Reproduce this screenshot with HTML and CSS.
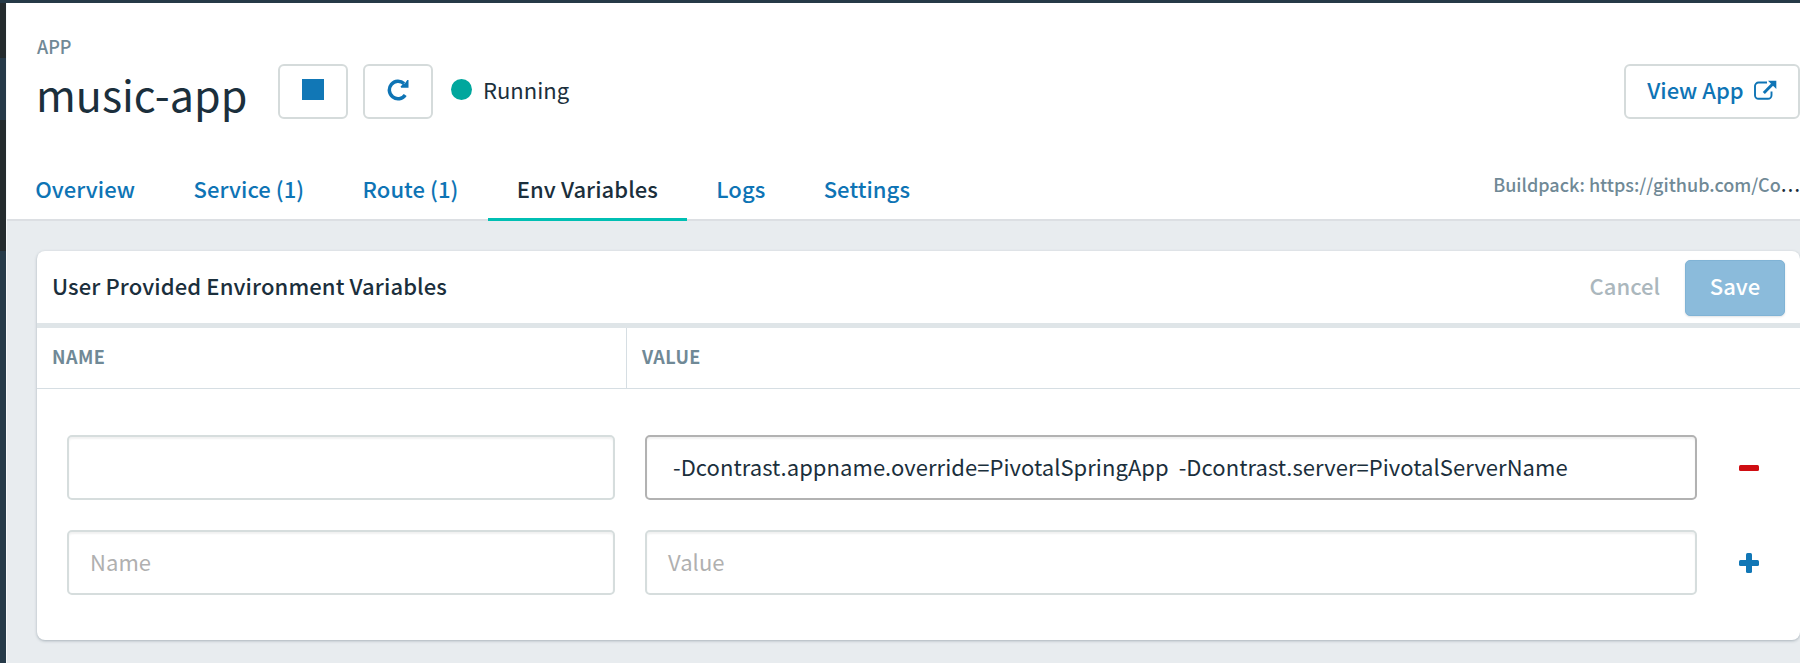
FILE: index.html
```html
<!DOCTYPE html>
<html lang="en">
<head>
<meta charset="utf-8">
<title>music-app</title>
<link rel="stylesheet" href="styles.css">
</head>
<body>
<div class="shell">
  <div class="topbar"></div>
  <aside class="rail"><div class="rail-active"></div><div class="rail-gap"></div><div class="rail-rest"></div></aside>
  <main class="page">
    <header class="header">
      <div class="eyebrow">APP</div>
      <div class="title-row">
        <h1 class="title">music-app</h1>
        <button class="btn btn-icon" aria-label="Stop"><svg width="22" height="21"><rect width="22" height="21" fill="#1177b6"/></svg></button>
        <button class="btn btn-icon btn-restart" aria-label="Restart"><svg width="22" height="22" viewBox="0 0 22 22"><path d="M18.200 16A8.700 8.800 0 1 1 17 4.600" fill="none" stroke="#0e74b5" stroke-width="3.500"/><path d="M21.500 1v7.800h-7.300l-.7-1.300 2.500-2.500 2-.8L20.300 1z" fill="#0e74b5"/></svg></button>
        <span class="dot"></span>
        <span class="status">Running</span>
        <button class="btn btn-view"><span>View App</span><svg width="23" height="20" viewBox="0 0 23 20"><path d="M13 2.500H4.600A3.600 3.600 0 0 0 1 6.100v9.100a3.600 3.600 0 0 0 3.600 3.600h9.300a3.600 3.600 0 0 0 3.600-3.600V11.500" fill="none" stroke="#0e74b5" stroke-width="1.900"/><path d="M9.800 13L18.500 4.300" stroke="#0e74b5" stroke-width="3"/><path d="M14 .7h8.300v8.200z" fill="#0e74b5"/></svg></button>
      </div>
      <div class="tab-row">
        <nav class="tabs">
          <a class="tab tab-overview">Overview</a><a class="tab tab-service">Service (1)</a><a class="tab tab-route">Route (1)</a><a class="tab tab-env active">Env Variables</a><a class="tab tab-logs">Logs</a><a class="tab tab-settings">Settings</a>
        </nav>
        <div class="buildpack">Buildpack: https://github.com/Co<span class="more">…</span></div>
      </div>
    </header>
    <section class="card">
      <div class="card-head">
        <h2 class="card-title">User Provided Environment Variables</h2>
        <span class="cancel">Cancel</span>
        <button class="save">Save</button>
      </div>
      <div class="columns"><div class="col col-name">NAME</div><div class="col">VALUE</div></div>
      <div class="rows">
        <div class="row">
          <div class="field"></div>
          <div class="field field-value filled"> -Dcontrast.appname.override=PivotalSpringApp  -Dcontrast.server=PivotalServerName</div>
          <svg class="action" width="20" height="20"><rect y="7" width="20" height="6" rx="1.500" fill="#cf0d12"/></svg>
        </div>
        <div class="row">
          <div class="field placeholder">Name</div>
          <div class="field placeholder">Value</div>
          <svg class="action" width="20" height="20"><rect y="7" width="20" height="6" rx="1.500" fill="#1177b6"/><rect x="7" width="6" height="20" rx="1.500" fill="#1177b6"/></svg>
        </div>
      </div>
    </section>
  </main>
</div>
</body>
</html>
```
FILE: styles.css
```css
* { box-sizing: border-box; }
body { margin: 0; overflow: hidden; background: #e8ecef; color: #1b2f3c; font-family: "Noto Sans CJK SC", "Open Sans", sans-serif; }
button { font: inherit; }
.shell { display: grid; grid-template: 3px 660px / 6px 1794px; }
.topbar { grid-column: 1 / 3; background: #263a47; }
.rail { background: #242b2e; padding-top: 55px; display: flex; flex-direction: column; }
.rail-active { height: 62px; background: #263a49; }
.rail-gap { height: 131px; }
.rail-rest { flex: 1; background: #263a49; }
.page { display: flex; flex-direction: column; border-left: 1px solid #f7f9fa; }
.header { height: 218px; background: #fff; border-bottom: 2px solid #dcdfe3; display: flex; flex-direction: column; }
.eyebrow { margin: 28px 0 3px 30px; height: 30px; line-height: 30px; font-size: 18px; font-weight: 500; color: #708996; }
.title-row { display: flex; height: 55px; }
.title { margin: 0; padding-left: 29px; width: 271px; font-size: 43px; font-weight: 400; line-height: 58px; white-space: nowrap; }
.btn { border: 2px solid #d5dbdb; border-radius: 6px; background: #fff; height: 55px; padding: 0; display: flex; align-items: flex-start; justify-content: center; color: #0e74b5; }
.btn-icon { width: 70px; padding-top: 13px; }
.btn-restart { margin-left: 15px; }
.dot { width: 21px; height: 21px; border-radius: 50%; background: #00a79d; margin: 15px 11px 0 18px; }
.status { font-size: 22px; line-height: 50px; }
.btn-view { width: 176px; margin-left: auto; font-size: 22px; font-weight: 500; line-height: 46px; gap: 10px; }
.btn-view svg { margin-top: 14px; }
.tab-row { display: flex; justify-content: space-between; flex: 1; padding-top: 41px; }
.tabs { display: flex; margin-left: -1px; }
.tab { height: 61px; padding: 0 29.200px; font-size: 22px; font-weight: 500; line-height: 56px; letter-spacing: .06px; color: #0e74b5; white-space: nowrap; }
.tab.active { color: #1b2f3c; border-bottom: 3px solid #00bfb3; }
.buildpack { font-size: 18px; line-height: 48px; font-weight: 500; color: #708996; white-space: nowrap; }
.more { color: #1b2f3c; }
.card { margin: 30px 0 0 30px; height: 389px; background: #fff; border-radius: 8px; box-shadow: 0 1px 3px rgba(50, 70, 85, .35); }
.card-head { height: 77px; border-bottom: 5px solid #dfe5e8; display: flex; padding: 9px 15px 0 15px; }
.card-title { margin: 0 auto 0 0; font-size: 22px; font-weight: 500; line-height: 50px; letter-spacing: .11px; }
.cancel { font-size: 22px; font-weight: 500; line-height: 50px; color: #abb7bd; margin-right: 25px; }
.save { width: 100px; height: 56px; border: 1px solid #80b3d5; border-radius: 5px; background: #8bbbdb; color: #fff; font-size: 22px; font-weight: 500; line-height: 48px; padding: 0 0 6px; box-shadow: 0 1px 2px rgba(50, 70, 85, .15); }
.columns { display: flex; height: 61px; border-bottom: 1px solid #d6dee3; }
.col { padding-left: 15px; font-size: 18px; font-weight: 700; line-height: 57px; letter-spacing: .45px; color: #708996; }
.col-name { width: 590px; border-right: 1px solid #d6dee3; }
.rows { padding: 46px 0 0 30px; display: grid; gap: 30px; }
.row { display: grid; grid-template-columns: 548px 1052px 20px; column-gap: 30px; align-items: center; }
.row .action { margin-left: 12px; }
.field { height: 65px; border: 2px solid #d6dddd; border-radius: 5px; box-shadow: inset 0 2px 2px rgba(0, 0, 0, .06); padding-left: 21px; font-size: 22px; line-height: 59px; letter-spacing: .05px; white-space: pre; }
.filled { border-color: #b2b2b2; }
.placeholder { color: #b0b0b0; }
```
